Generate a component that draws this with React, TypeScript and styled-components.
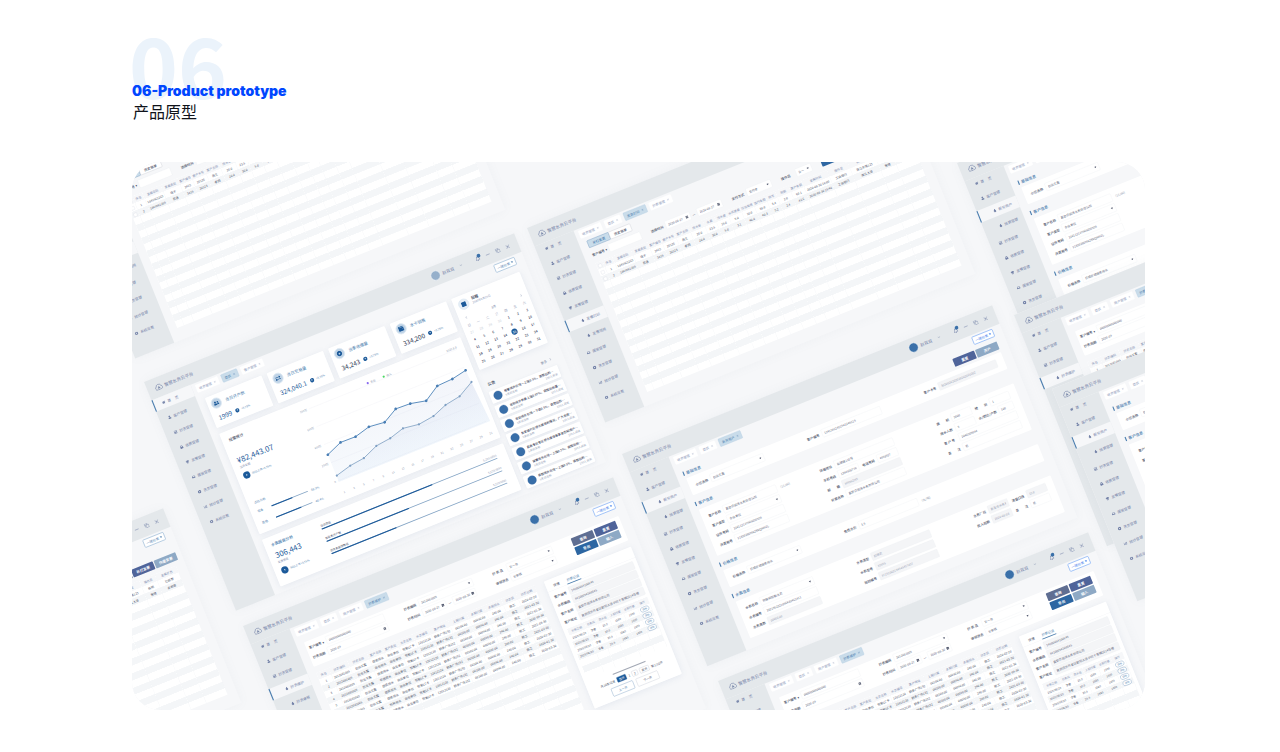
import React, { useId } from "react";
import styled, { createGlobalStyle, css } from "styled-components";
import {
  FaHome, FaUser, FaCalculator, FaLock, FaTrophy, FaTint, FaInbox, FaDotCircle, FaChartBar, FaCog,
  FaUserFriends, FaExchangeAlt, FaWallet, FaCalendarAlt, FaRegBell, FaArrowUp, FaSquare,
} from "react-icons/fa";
import { ChevronDown, ChevronLeft, ChevronRight, Copy, Minus, X } from "lucide-react";

const c = {
  canvas: "#f6f7f9",
  chrome: "#e4e8eb",
  navy: "#7482a8",
  ink: "#4a5167",
  blue: "#1c5a9a",
  mid: "#4a7dae",
  pale: "#c9dcea",
  line: "#edeff3",
};

const GlobalStyle = createGlobalStyle`
  * { box-sizing: border-box; }
  body {
    margin: 0;
    background: #fff;
    font-family: "Noto Sans CJK SC", "Noto Sans", sans-serif;
  }
  button, input, select { font-family: inherit; margin: 0; }
`;

/* ---------- page ---------- */

const Page = styled.main`
  padding: 21px 135px 42px 132px;
`;
const Heading = styled.header`
  height: 141px;
`;
const BigNumber = styled.div`
  font-size: 83px;
  line-height: 84px;
  font-weight: 700;
  color: #ebf3fb;
  margin-left: -3px;
`;
const Title = styled.h1`
  margin: -23px 0 0;
  position: relative;
  font-family: Inter, "Liberation Sans", sans-serif;
  font-weight: 900;
  font-size: 14px;
  line-height: 18px;
  color: #0046ff;
`;
const Subtitle = styled.p`
  margin: 0;
  padding-left: 1px;
  font-size: 16px;
  line-height: 22px;
  color: #10131a;
`;
const Canvas = styled.section`
  position: relative;
  height: 548px;
  overflow: hidden;
  border-radius: 28px;
  background: ${c.canvas};
`;

/* ---------- application window ---------- */

const Win = styled.article<{ $x: number; $y: number; $h: number }>`
  position: absolute;
  left: ${(p) => p.$x}px;
  top: ${(p) => p.$y}px;
  width: 1440px;
  height: ${(p) => p.$h}px;
  transform-origin: 0 0;
  transform: rotate(-21.9deg) scale(0.277);
  display: flex;
  flex-direction: column;
  background: ${c.canvas};
  box-shadow: 0 0 40px rgba(120, 135, 160, 0.06);
  color: ${c.ink};
  font-size: 12px;
`;
const TopBar = styled.header`
  flex: none;
  height: 72px;
  padding: 0 30px 0 28px;
  background: ${c.chrome};
  display: flex;
  align-items: center;
  justify-content: space-between;
`;
const Brand = styled.div`
  display: flex;
  align-items: center;
  gap: 6px;
  font-size: 16px;
  color: ${c.navy};
`;
const TopTools = styled.div`
  display: flex;
  align-items: center;
  color: ${c.navy};
  gap: 20px;
`;
const Avatar = styled.span<{ $soft?: boolean }>`
  width: 36px;
  height: 36px;
  border-radius: 50%;
  border: 2px solid #f2f5f8;
  background: ${(p) => (p.$soft ? "#96b0cb" : "#3a70a9")};
`;
const UserName = styled.span`
  display: flex;
  align-items: center;
  gap: 22px;
  font-size: 15px;
  margin: 0 30px 0 -12px;
`;
const ToolButton = styled.button`
  position: relative;
  display: flex;
  padding: 0;
  border: 0;
  background: none;
  color: inherit;
`;
const Dot = styled.span`
  position: absolute;
  right: -4px;
  top: -6px;
  width: 13px;
  height: 13px;
  border-radius: 50%;
  background: #3a70a9;
`;
const Body = styled.div`
  flex: 1;
  display: flex;
  min-height: 0;
`;
const Sidebar = styled.nav`
  flex: none;
  width: 152px;
  background: ${c.chrome};
  display: flex;
  flex-direction: column;
  gap: 14px;
`;
const NavLink = styled.a<{ $active?: boolean; $sub?: boolean }>`
  display: flex;
  align-items: center;
  gap: 8px;
  height: 44px;
  padding-left: ${(p) => (p.$sub ? 52 : 28)}px;
  border-left: 4px solid ${(p) => (p.$active ? c.mid : "transparent")};
  background: ${(p) => (p.$active ? c.canvas : "transparent")};
  font-size: 13px;
  color: ${c.navy};
  text-decoration: none;
  white-space: pre;
`;
const Main = styled.div`
  flex: 1;
  min-width: 0;
  display: flex;
  flex-direction: column;
`;
const TabBar = styled.div`
  flex: none;
  display: flex;
  align-items: center;
  height: 44px;
  gap: 12px;
  padding: 0 32px 0 14px;
`;
const Tab = styled.button<{ $active?: boolean }>`
  height: 30px;
  padding: 0 10px;
  display: flex;
  align-items: center;
  gap: 8px;
  border: 1px solid ${(p) => (p.$active ? "#a9c6de" : "#fff")};
  border-radius: 3px;
  background: ${(p) => (p.$active ? c.pale : "#fff")};
  color: ${(p) => (p.$active ? c.mid : "#8e9aba")};
  font-size: 12px;
`;
const QuickButton = styled.button<{ $bright?: boolean }>`
  margin-left: auto;
  height: 30px;
  padding: 0 8px;
  display: flex;
  align-items: center;
  gap: 5px;
  background: #fff;
  border: 2px solid ${(p) => (p.$bright ? "#6ba0f5" : "#8db1d2")};
  border-radius: 4px;
  color: ${(p) => (p.$bright ? "#2f74ea" : c.mid)};
  font-size: 12px;
`;
const Content = styled.div<{ $top: number }>`
  padding: ${(p) => p.$top}px 34px 0 30px;
`;
const Card = styled.section`
  background: #fff;
  border-radius: 4px;
  box-shadow: 0 4px 24px rgba(110, 130, 170, 0.12);
`;
const Caret = styled.span`
  width: 0;
  height: 0;
  flex: none;
  border: 4px solid transparent;
  border-top: 6px solid currentColor;
  border-bottom: 0;
`;

function Logo() {
  return (
    <svg width="30" height="24" viewBox="0 0 30 24" fill="none" stroke={c.navy} strokeWidth="2">
      <path d="M8 22a6.500 6.500 0 0 1-2-12.600a9 9 0 0 1 17.500-.4a6.800 6.800 0 0 1-1.500 13z" />
      <path d="M15 10l-4 7h8z" fill={c.navy} strokeWidth="1" />
    </svg>
  );
}

type NavEntry = { text: string; icon: React.ReactNode; sub?: boolean; active?: boolean };

const topLinks = {
  home: { text: "首　 页", icon: <FaHome /> },
  customer: { text: "客户管理", icon: <FaUser /> },
  reading: { text: "抄表管理", icon: <FaCalculator /> },
  charge: { text: "收费管理", icon: <FaLock /> },
  invoice: { text: "发票管理", icon: <FaTrophy /> },
  install: { text: "报装管理", icon: <FaInbox /> },
  meter: { text: "表务管理", icon: <FaDotCircle /> },
  stats: { text: "统计管理", icon: <FaChartBar /> },
  system: { text: "系统设置", icon: <FaCog /> },
};
const sub = (text: string, active = false): NavEntry => ({ text, icon: <FaTint />, sub: true, active });
const t = topLinks;
const tail: NavEntry[] = [t.install, t.meter, t.stats, t.system];

const navs: Record<string, NavEntry[]> = {
  dashboard: [{ ...t.home, active: true }, t.customer, t.reading, t.charge, t.invoice, ...tail],
  invoice: [t.home, t.customer, t.reading, t.charge, t.invoice, sub("发票打印", true), sub("发票领用"), ...tail],
  form: [t.home, t.customer, sub("新开用户", true), sub("结算管理"), t.reading, t.charge, t.invoice, ...tail],
  reading: [t.home, t.customer, t.reading, sub("抄表维护", true), sub("抄表审核"), t.charge, t.invoice, ...tail],
};

type WindowProps = {
  x: number; y: number; h: number; nav: string; tabs: string[]; current: number;
  top: number; soft?: boolean; children: React.ReactNode;
};

function AppWindow({ x, y, h, nav, tabs, current, top, soft, children }: WindowProps) {
  return (
    <Win $x={x} $y={y} $h={h}>
      <TopBar>
        <Brand><Logo />智慧水务云平台</Brand>
        <TopTools>
          <Avatar $soft={soft} />
          <UserName>赵双双<ChevronDown size={12} /></UserName>
          <ToolButton aria-label="消息"><FaRegBell size={18} /><Dot /></ToolButton>
          <ToolButton aria-label="最小化"><Minus size={20} /></ToolButton>
          <ToolButton aria-label="还原"><Copy size={18} /></ToolButton>
          <ToolButton aria-label="关闭"><X size={19} /></ToolButton>
        </TopTools>
      </TopBar>
      <Body>
        <Sidebar>
          {navs[nav].map((n) => (
            <NavLink key={n.text} href="#" $active={n.active} $sub={n.sub}>{n.icon}{n.text}</NavLink>
          ))}
        </Sidebar>
        <Main>
          <TabBar>
            {tabs.map((name, i) => (
              <Tab key={name} $active={i === current}>{name}<X size={9} /></Tab>
            ))}
            <QuickButton $bright={!soft && nav !== "invoice"}>一键分类<Caret /></QuickButton>
          </TabBar>
          <Content $top={top}>{children}</Content>
        </Main>
      </Body>
    </Win>
  );
}

/* ---------- controls ---------- */

const FieldBox = styled.div<{ $w?: number }>`
  display: flex;
  align-items: center;
  gap: 8px;
  height: 30px;
  min-width: 0;
  ${(p) => (p.$w ? css`flex: none; width: ${p.$w}px;` : css`flex: 1;`)}
`;
const FieldLabel = styled.label`
  flex: none;
  min-width: 50px;
  font-size: 12px;
  font-weight: 500;
  white-space: pre;
`;
const controlStyle = css<{ $dim?: boolean; $shade?: boolean }>`
  flex: 1;
  min-width: 0;
  width: 100%;
  height: 30px;
  padding: 0 8px;
  border: 1px solid ${c.line};
  border-radius: 3px;
  background: ${(p) => (p.$dim || p.$shade ? "#f4f5f7" : "#fff")};
  color: ${(p) => (p.$dim ? "#9aa2b5" : "#5e667b")};
  font-size: 11px;
`;
const TextInput = styled.input`${controlStyle}`;
const Select = styled.select`
  ${controlStyle}
  appearance: none;
`;
const SelectWrap = styled.span`
  flex: 1;
  min-width: 0;
  display: grid;
  align-items: center;
  color: ${c.ink};
  & > * { grid-area: 1 / 1; }
  & > ${Caret} { justify-self: end; margin-right: 10px; pointer-events: none; }
  & > svg { justify-self: end; margin-right: 8px; }
`;

type FieldProps = { label: string; value: string; kind?: "text" | "select" | "date" | "dim" | "shade"; w?: number };

function Field({ label, value, kind = "text", w }: FieldProps) {
  const id = useId();
  return (
    <FieldBox $w={w}>
      {label && <FieldLabel htmlFor={id}>{label}</FieldLabel>}
      {kind === "select" ? (
        <SelectWrap>
          <Select id={id}><option>{value}</option></Select>
          <Caret />
        </SelectWrap>
      ) : kind === "date" ? (
        <SelectWrap>
          <TextInput id={id} defaultValue={value} aria-label={label || "日期"} />
          <FaCalendarAlt size={11} />
        </SelectWrap>
      ) : (
        <TextInput id={id} defaultValue={value} $dim={kind === "dim"} $shade={kind === "shade"} />
      )}
    </FieldBox>
  );
}

const tones = { slate: "#5f6e92", indigo: "#4f649a", blue: "#2d66a2", sky: "#8ea9c5" };
const ActionButton = styled.button<{ $tone: keyof typeof tones }>`
  width: 84px;
  height: 30px;
  border: 0;
  border-radius: 3px;
  background: ${(p) => tones[p.$tone]};
  color: #fff;
  font-size: 13px;
  font-weight: 700;
`;

/* ---------- dashboard ---------- */

const DashGrid = styled.div`
  display: grid;
  grid-template-columns: 1fr 266px;
  gap: 20px;
`;
const Column = styled.div`
  display: flex;
  flex-direction: column;
  gap: 22px;
`;
const StatRow = styled.div`
  display: grid;
  grid-template-columns: repeat(4, 1fr);
  gap: 20px;
`;
const StatCard = styled(Card)`
  height: 117px;
  padding: 12px;
`;
const StatHead = styled.div`
  display: flex;
  align-items: center;
  gap: 14px;
  font-size: 15px;
  color: ${c.mid};
`;
const RoundIcon = styled.span<{ $plain?: boolean }>`
  width: 40px;
  height: 40px;
  border-radius: 50%;
  border: 3px solid #dfe9f3;
  background: ${(p) => (p.$plain ? "#e6eef6" : "#bfd3e6")};
  color: ${c.blue};
  display: flex;
  align-items: center;
  justify-content: center;
  font-size: 20px;
`;
const StatValue = styled.div<{ $dark?: boolean }>`
  display: flex;
  align-items: center;
  gap: 14px;
  margin-top: 16px;
  padding-left: 8px;
  font-size: 23px;
  line-height: 32px;
  color: ${(p) => (p.$dark ? "#26324e" : c.blue)};
`;
const Trend = styled.span<{ $big?: boolean }>`
  display: flex;
  align-items: center;
  gap: 8px;
  font-size: 10px;
  line-height: 16px;
  color: ${c.mid};
  & > i {
    width: ${(p) => (p.$big ? 26 : 15)}px;
    height: ${(p) => (p.$big ? 26 : 15)}px;
    border-radius: 50%;
    background: ${c.blue};
    color: #fff;
    display: flex;
    align-items: center;
    justify-content: center;
    font-size: 8px;
  }
`;
const ChartCard = styled(Card)`
  height: 391px;
  display: grid;
  grid-template-columns: 300px 1fr;
`;
const ReportCard = styled(Card)`
  height: 181px;
  display: grid;
  grid-template-columns: 215px 1fr;
`;
const Metric = styled.div<{ $pad: number }>`
  padding: ${(p) => p.$pad}px 0 0 24px;
`;
const MetricTitle = styled.h3<{ $gap: number; $blue?: boolean }>`
  margin: 0 0 ${(p) => p.$gap}px;
  font-size: 14px;
  line-height: 20px;
  font-weight: 500;
  color: ${(p) => (p.$blue ? c.mid : c.ink)};
`;
const Amount = styled.div`
  font-size: 28px;
  line-height: 38px;
  color: ${c.blue};
`;
const Note = styled.div`
  font-size: 10px;
  line-height: 16px;
  margin-bottom: 14px;
  color: #7c89a8;
`;
const Share = styled.div`
  margin-top: 80px;
  display: flex;
  flex-direction: column;
  gap: 26px;
  font-size: 11px;
  line-height: 18px;
  color: ${c.mid};
`;
const ShareTitle = styled.div`
  margin-bottom: -10px;
`;
const ShareRow = styled.div`
  display: grid;
  grid-template-columns: 42px 142px auto;
  gap: 12px;
  align-items: center;
`;
const Track = styled.div`
  height: 3px;
  border-radius: 2px;
  background: #86a6c6;
`;
const Fill = styled.div`
  height: 4px;
  border-radius: 2px;
  background: ${c.blue};
`;
const Progress = styled.div`
  padding: 24px 39px 0 0;
  display: flex;
  flex-direction: column;
  gap: 27px;
`;
const ProgressHead = styled.div`
  display: flex;
  justify-content: space-between;
  font-size: 10px;
  line-height: 16px;
  margin-bottom: 2px;
  & > span { color: #95a0b8; }
`;
const CalendarCard = styled(Card)`
  height: 276px;
  padding: 14px 8px;
`;
const CalendarHead = styled.div`
  display: flex;
  gap: 12px;
  padding-left: 8px;
  font-size: 10px;
  line-height: 16px;
  color: #8390b3;
  & strong {
    display: block;
    font-size: 14px;
    line-height: 18px;
    color: ${c.ink};
  }
`;
const MonthRow = styled.div`
  display: flex;
  align-items: center;
  justify-content: space-between;
  height: 28px;
  margin-top: 14px;
  padding: 0 12px;
  font-size: 11px;
  color: #7583a5;
`;
const CalendarTable = styled.table`
  width: 100%;
  table-layout: fixed;
  border-collapse: collapse;
  text-align: center;
  font-size: 12px;
  & th, & td { height: 28px; padding: 0; font-weight: 500; }
  & th { color: #97a2b9; font-weight: 400; }
`;
const Day = styled.td<{ $muted?: boolean; $today?: boolean }>`
  color: ${(p) => (p.$muted ? "#d3d8e2" : "#37415c")};
  & > span {
    display: inline-block;
    width: 22px;
    line-height: 22px;
    border-radius: 50%;
    ${(p) => p.$today && css`background: ${c.blue}; color: #fff;`}
  }
`;
const NoticeHead = styled.div`
  display: flex;
  align-items: center;
  justify-content: space-between;
  margin: 25px 8px -7px;
  height: 24px;
  font-size: 14px;
  font-weight: 700;
  & > a {
    display: flex;
    align-items: center;
    gap: 8px;
    font-size: 12px;
    font-weight: 400;
    color: #7b879f;
    text-decoration: none;
  }
`;
const NoticeList = styled.ul`
  list-style: none;
  margin: 0;
  padding: 0;
  display: flex;
  flex-direction: column;
  gap: 9px;
`;
const Notice = styled.li`
  display: flex;
  align-items: center;
  gap: 10px;
  height: 46px;
  padding: 0 10px 0 12px;
  background: #fff;
  border-radius: 4px;
  box-shadow: 0 3px 14px rgba(110, 130, 170, 0.12);
  & > i { flex: none; width: 32px; height: 32px; border-radius: 50%; background: #386ea8; border: 1px solid #24599a; }
  & > div { flex: 1; min-width: 0; }
`;
const NoticeText = styled.div`
  font-size: 11px;
  line-height: 18px;
  font-weight: 500;
  color: #3a4157;
  overflow: hidden;
  white-space: nowrap;
  text-overflow: ellipsis;
`;
const NoticeMeta = styled.div`
  display: flex;
  justify-content: space-between;
  font-size: 10px;
  line-height: 14px;
  color: #929db5;
`;

const stats = [
  { label: "当日开户数", value: "1999", icon: <FaUserFriends /> },
  { label: "当日交易量", value: "324,040.1", icon: <FaExchangeAlt /> },
  { label: "当季收缴量", value: "34,243", icon: <FaDotCircle />, dark: true },
  { label: "水卡销售", value: "334,200", icon: <FaWallet />, dark: true },
];
const upper = [[36, 216], [95, 192], [153, 193], [211, 178], [270, 184], [325, 154], [381, 156], [438, 168], [495, 133], [555, 130], [611, 119]];
const lower = [[38, 298], [96, 283], [152, 276], [210, 252], [267, 245], [323, 229], [382, 237], [442, 229], [497, 208], [556, 198], [615, 166]];
const path = (pts: number[][]) => pts.map(([px, py]) => `${px},${py}`).join(" ");

function LineChart() {
  const gid = useId();
  return (
    <svg width="638" height="391" viewBox="0 0 638 391" fontSize="10" fill="#8e99b0">
      <defs>
        <linearGradient id={gid} x1="0" y1="0" x2="0" y2="1">
          <stop offset="0" stopColor="#8f9fd0" stopOpacity=".11" />
          <stop offset="1" stopColor="#8fb8e6" stopOpacity=".07" />
        </linearGradient>
      </defs>
      {["800万", "600万", "400万", "200万", "0"].map((label, i) => (
        <g key={label}>
          <text x="26" y={41 + i * 70} textAnchor="end">{label}</text>
          <path d={`M36 ${37 + i * 70}H611`} stroke="#eaedf2" />
        </g>
      ))}
      {Array.from({ length: 16 }, (_, i) => (
        <text key={i} x={41 + i * 38} y="367" textAnchor="middle">{i * 2 + 1}</text>
      ))}
      <polygon points={`36,322 ${path(upper)} 625,322`} fill={`url(#${gid})`} />
      <polygon points={`36,322 ${path(lower)} 625,322`} fill={`url(#${gid})`} />
      <polyline points={path(lower)} fill="none" stroke="#8eabc9" strokeWidth="3" />
      <polyline points={path(upper)} fill="none" stroke="#5186ba" strokeWidth="3" />
      {upper.map(([px, py]) => <circle key={px} cx={px} cy={py} r="5" fill="#4a7fb5" />)}
      {lower.map(([px, py]) => <circle key={px} cx={px} cy={py} r="4" fill="#7fa0c4" />)}
      <circle cx="266" cy="30" r="4" fill="#8a6cf0" />
      <text x="276" y="34">支出</text>
      <circle cx="328" cy="30" r="4" fill="#4bd964" />
      <text x="338" y="34">收入</text>
      <text x="592" y="33" textAnchor="middle">2020.8.8</text>
    </svg>
  );
}

const notices = [
  "接管境外在线一上涨0.5%，调整后的基价", "收取境外有费上涨0.67%，调整后的基价", "收取境外在线一下调0.5%，调整后的基价",
  "金堂镇片区停水维修的情况，广大市民", "嘉善专区专区停水维修等事宜告知用户", "接管境外在线一上涨0.5%，调整后的基价",
  "调整境外在线一上涨0.5%，调整后的基价",
];
const weeks = [
  [27, 28, 29, 30, 1, 2, 3], [4, 5, 6, 7, 8, 9, 10], [11, 12, 13, 14, 15, 16, 17],
  [18, 19, 20, 21, 22, 23, 24], [25, 26, 27, 28, 29, 30, 31],
];
const progress = [
  { name: "当前用量", pct: 63 }, { name: "智能表开户数", pct: 47 }, { name: "远传表报装数量", pct: 37 },
];

function Dashboard(props: { x: number; y: number }) {
  return (
    <AppWindow {...props} h={890} nav="dashboard" tabs={["收费管理", "首页", "客户管理"]} current={1} top={20} soft>
      <DashGrid>
        <Column>
          <StatRow>
            {stats.map((s) => (
              <StatCard key={s.label}>
                <StatHead><RoundIcon>{s.icon}</RoundIcon>{s.label}</StatHead>
                <StatValue $dark={s.dark}>{s.value}<Trend><i><FaArrowUp /></i>+0.75%</Trend></StatValue>
              </StatCard>
            ))}
          </StatRow>
          <ChartCard>
            <Metric $pad={23}>
              <MetricTitle $gap={51}>经营统计</MetricTitle>
              <Amount>¥82,443.07</Amount>
              <Note>当月总额</Note>
              <Trend $big><i><FaArrowUp /></i>同比上月+0.75%</Trend>
              <Share>
                <ShareTitle>占比分析</ShareTitle>
                <ShareRow>现金<Track><Fill style={{ width: "58%" }} /></Track>60.9%</ShareRow>
                <ShareRow>其他<Track><Fill style={{ width: "70%" }} /></Track>40.4%</ShareRow>
              </Share>
            </Metric>
            <LineChart />
          </ChartCard>
          <ReportCard>
            <Metric $pad={19}>
              <MetricTitle $gap={11} $blue>水表报装分析</MetricTitle>
              <Amount>306,443</Amount>
              <Note>总报装量</Note>
              <Trend $big><i><FaArrowUp /></i>同比上年+0.75%</Trend>
            </Metric>
            <Progress>
              {progress.map((p) => (
                <div key={p.name}>
                  <ProgressHead>{p.name}<span>5,230/6890</span></ProgressHead>
                  <Track><Fill style={{ width: `${p.pct}%` }} /></Track>
                </div>
              ))}
            </Progress>
          </ReportCard>
        </Column>
        <Column>
          <CalendarCard>
            <CalendarHead>
              <RoundIcon $plain><FaSquare /></RoundIcon>
              <div><strong>日程</strong>2020年8月15日</div>
            </CalendarHead>
            <MonthRow><ChevronLeft size={12} />8月<ChevronRight size={12} /></MonthRow>
            <CalendarTable>
              <thead><tr>{[..."日一二三四五六"].map((d) => <th key={d}>{d}</th>)}</tr></thead>
              <tbody>
                {weeks.map((w, r) => (
                  <tr key={r}>
                    {w.map((d) => <Day key={d} $muted={r === 0 && d > 20} $today={d === 15}><span>{d}</span></Day>)}
                  </tr>
                ))}
              </tbody>
            </CalendarTable>
          </CalendarCard>
          <NoticeHead>公告<a href="#">更多<ChevronRight size={12} /></a></NoticeHead>
          <NoticeList>
            {notices.map((n, i) => (
              <Notice key={i}>
                <i />
                <div>
                  <NoticeText>{n}，请周知</NoticeText>
                  <NoticeMeta><span>5天前发布</span><span>100人阅读</span></NoticeMeta>
                </div>
              </Notice>
            ))}
          </NoticeList>
        </Column>
      </DashGrid>
    </AppWindow>
  );
}

/* ---------- data tables ---------- */

const DataTable = styled.table<{ $row: number; $size: number }>`
  width: 100%;
  table-layout: fixed;
  border-collapse: collapse;
  text-align: center;
  font-size: ${(p) => p.$size}px;
  white-space: nowrap;
  background: #fff;
  & th, & td {
    height: ${(p) => p.$row}px;
    line-height: 16px;
    padding: 0;
    overflow: hidden;
    border-right: 1px solid #f0f2f5;
  }
  & th { color: #8491b2; font-weight: 400; background: ${c.canvas}; height: 26px; }
  & td { color: #4d5469; }
  & tbody tr:nth-child(even) td { background: #f4f6f8; border-right-color: #eef1f4; }
  & input { width: 13px; height: 13px; appearance: none; background: #fff; border: 1px solid #d8dce4; border-radius: 2px; vertical-align: middle; }
`;

type GridProps = { cols: [string, number][]; rows: string[][]; total: number; row: number; size?: number; check?: boolean };

function Grid({ cols, rows, total, row, size = 11, check }: GridProps) {
  return (
    <DataTable $row={row} $size={size}>
      <colgroup>
        {check && <col width={26} />}
        {cols.map(([name, w], i) => <col key={name + i} width={w} />)}
      </colgroup>
      <thead>
        <tr>
          {check && <th><input type="checkbox" aria-label="全选" /></th>}
          {cols.map(([name], i) => <th key={i}>{name}</th>)}
        </tr>
      </thead>
      <tbody>
        {Array.from({ length: total }, (_, r) => (
          <tr key={r}>
            {check && <td>{rows[r] && <input type="checkbox" aria-label={`选择第${r + 1}行`} />}</td>}
            {cols.map((_, i) => {
              const value = rows[r]?.[i];
              return <td key={i}>{value === "详情" ? <Detail>{value}</Detail> : value}</td>;
            })}
          </tr>
        ))}
      </tbody>
    </DataTable>
  );
}

const Detail = styled.button`
  height: 18px;
  padding: 0 6px;
  border: 1px solid ${c.mid};
  border-radius: 9px;
  background: #fff;
  color: ${c.mid};
  font-size: 9px;
  line-height: 14px;
`;
const Switch = styled.div`
  display: flex;
  margin-bottom: 12px;
`;
const SwitchButton = styled.button<{ $active?: boolean }>`
  width: 84px;
  height: 28px;
  border: 1px solid ${(p) => (p.$active ? c.mid : "#b9bec9")};
  border-radius: 3px;
  background: ${(p) => (p.$active ? c.pale : "#fff")};
  color: ${(p) => (p.$active ? c.mid : c.ink)};
  font-size: 12px;
  font-weight: 500;
`;
const FilterRow = styled.div`
  display: flex;
  align-items: center;
  gap: 38px;
  margin-bottom: 17px;
`;
const DateRange = styled.div`
  display: flex;
  align-items: center;
  gap: 8px;
`;
const Actions = styled.div`
  margin-left: auto;
  display: flex;
  gap: 4px;
`;

const invoiceCols: [string, number][] = [
  ["序号", 38], ["发票号码", 72], ["发票类型", 66], ["客户编号", 48], ["客户卡号", 54], ["客户名称", 56], ["用水量", 56],
  ["水费", 44], ["污水费", 48], ["水资源费", 50], ["垃圾处理", 50], ["违约金额", 50], ["税率", 40], ["税额", 52],
  ["客户金额", 50], ["发票时间", 100], ["操作员", 80], ["客户地址", 100], ["操作员", 60], ["发票状态", 83],
];
const invoiceRows = [
  ["1", "1849561265", "电子", "3415", "20126", "张三", "20.0", "23.5", "15.0", "5.0", "10.0", "38.0", "3.4", "2.0", "60.1", "2020-08-30 16:00", "工商银行", "滨江东路125", "张明", "已邮寄"],
  ["2", "1849561265", "普通", "3415", "20123", "李四", "20.0", "30.0", "5.0", "3.1", "40.0", "40.3", "5.2", "2.4", "42.6", "2020-08-30 15:40", "工商银行", "滨江大道", "管理", "未邮寄"],
];

function InvoiceWindow(props: { x: number; y: number }) {
  return (
    <AppWindow {...props} h={757} nav="invoice" tabs={["收费管理", "首页", "发票打印", "抄表管理"]} current={2} top={7}>
      <Switch>
        <SwitchButton $active>补打发票</SwitchButton>
        <SwitchButton>历史账单</SwitchButton>
      </Switch>
      <FilterRow>
        <Field label="客户编号 ▾" value="" w={190} />
        <DateRange>
          <Field label="选择时间" value="2020-08-27" kind="date" w={154} />—
          <Field label="" value="2020-08-27" kind="date" w={96} />
        </DateRange>
        <Field label="支付方式" value="支付宝" kind="select" w={154} />
        <Field label="操作员" value="全一" kind="select" w={118} />
        <Actions>
          <ActionButton $tone="blue">查询</ActionButton>
          <ActionButton $tone="slate">重置</ActionButton>
          <ActionButton $tone="indigo">补打发票</ActionButton>
          <ActionButton $tone="sky">作废发票</ActionButton>
        </Actions>
      </FilterRow>
      <Grid cols={invoiceCols} rows={invoiceRows} total={19} row={25} check />
    </AppWindow>
  );
}

/* ---------- customer form ---------- */

const SectionTitle = styled.div<{ $first?: boolean }>`
  display: flex;
  align-items: ${(p) => (p.$first ? "flex-end" : "center")};
  justify-content: space-between;
  height: ${(p) => (p.$first ? 30 : 20)}px;
  margin: ${(p) => (p.$first ? 0 : 23)}px 0 ${(p) => (p.$first ? 11 : 13)}px -4px;
  & > h3 {
    margin: 0;
    padding-left: 8px;
    border-left: 4px solid ${c.mid};
    font-size: 14px;
    line-height: 16px;
    font-weight: 500;
    color: ${c.mid};
  }
`;
const FormCard = styled(Card)`
  box-shadow: none;
  padding: 14px 28px 14px 24px;
`;
const FormRow = styled.div`
  display: grid;
  grid-template-columns: 266px 288px 285px;
  justify-content: space-between;
  align-items: center;
  height: 38px;
`;
const Pair = styled.div<{ $wide?: boolean }>`
  display: flex;
  align-items: center;
  gap: 14px;
  min-width: 0;
  grid-column: ${(p) => (p.$wide ? "2 / 4" : "auto")};
`;
const Hint = styled.span`
  flex: none;
  font-size: 11px;
  color: #8e98ad;
`;

function CustomerWindow(props: { x: number; y: number }) {
  return (
    <AppWindow {...props} h={826} nav="form" tabs={["收费管理", "首页", "新开用户"]} current={2} top={11}>
      <SectionTitle $first>
        <h3>基础信息</h3>
        <Actions>
          <ActionButton $tone="indigo">重置</ActionButton>
          <ActionButton $tone="sky">开户</ActionButton>
        </Actions>
      </SectionTitle>
      <FormCard>
        <FormRow>
          <Field label="小区名称" value="创业天露" kind="select" />
          <Field label="客户编号" value="15415412451541245115" />
          <Field label="客户卡号" value="3020020202020202020202" kind="dim" />
        </FormRow>
      </FormCard>
      <SectionTitle><h3>客户信息</h3></SectionTitle>
      <FormCard>
        <FormRow>
          <Pair><Field label="客户名称" value="昌黎县润泽水务有限公司" w={266} /><Hint>(11/80)</Hint></Pair>
          <Field label="详细地址" value="仙湖镇110号" />
          <Pair><Field label="面　　积" value="5000" /><Field label="楼　　层" value="1" /></Pair>
        </FormRow>
        <FormRow>
          <Field label="客户类型" value="企业单位" kind="select" />
          <Pair><Field label="手机号码" value="13545687760" /><Field label="电话号码" value="4558527" /></Pair>
          <Pair><Field label="用水人数" value="5" /><Field label="水/燃比/户数" value="100" /></Pair>
        </FormRow>
        <FormRow>
          <Field label="证件号码" value="310112197505050555" />
          <Field label="邮　　箱" value="H5OH2H5" kind="dim" />
          <Field label="客 户 号" value="2040505044" />
        </FormRow>
        <FormRow>
          <Field label="开票税号" value="91350200MA2XNQHM2L" />
          <Field label="开票名称" value="昌黎县润泽水务有限公司" />
          <Field label="备　　注" value="无" />
        </FormRow>
      </FormCard>
      <SectionTitle><h3>价格信息</h3></SectionTitle>
      <FormCard>
        <FormRow>
          <Field label="价格名称" value="县城在城居民用水" kind="select" />
          <Pair $wide><Field label="免费水价" value="3.5" w={288} /><Hint>(元/吨)</Hint></Pair>
        </FormRow>
      </FormCard>
      <SectionTitle><h3>水表信息</h3></SectionTitle>
      <FormCard>
        <FormRow>
          <Field label="水表名称" value="物联网智能水表" kind="select" />
          <Field label="水表类型" value="阶梯表" kind="dim" />
          <Pair><Field label="水表厂商" value="慈溪市水务科技" kind="dim" /><Field label="流量口径" value="15.0" kind="dim" /></Pair>
        </FormRow>
        <FormRow>
          <Field label="水表编号" value="3321562321056489461411" />
          <Field label="水表型号" value="55555" kind="dim" />
          <Pair><Field label="投入周期" value="2020-08-08" kind="dim" /><Field label="备　　注" value="无" /></Pair>
        </FormRow>
        <FormRow>
          <Field label="水表底数" value="00000.00" kind="dim" />
          <Field label="铅封编号" value="57151002154545457457" kind="dim" />
        </FormRow>
      </FormCard>
    </AppWindow>
  );
}

/* ---------- meter reading ---------- */

const FilterCard = styled(Card)`
  box-shadow: none;
  display: flex;
  justify-content: space-between;
  height: 95px;
  padding: 9px 18px 0 10px;
  margin-bottom: 24px;
`;
const FilterCol = styled.div<{ $w: number }>`
  width: ${(p) => p.$w}px;
  display: flex;
  flex-direction: column;
  gap: 8px;
  & > * { flex: none; }
`;
const ButtonGrid = styled.div`
  display: grid;
  grid-template-columns: 84px 84px;
  grid-auto-rows: 30px;
  gap: 5px;
  padding-top: 2px;
`;
const Split = styled.div`
  display: grid;
  grid-template-columns: 1fr 339px;
  gap: 36px;
  align-items: start;
`;
const Panel = styled(Card)`
  height: 495px;
  padding: 12px 14px;
  font-size: 12px;
`;
const PanelTabs = styled.div`
  display: flex;
  gap: 22px;
  padding: 0 24px;
  margin: 0 -14px 8px;
  border-bottom: 1px solid ${c.line};
`;
const PanelTab = styled.button<{ $active?: boolean }>`
  height: 30px;
  padding: 0 3px;
  border: 0;
  border-bottom: 3px solid ${(p) => (p.$active ? c.mid : "transparent")};
  background: none;
  color: ${(p) => (p.$active ? c.mid : c.ink)};
  font-size: 12px;
`;
const PanelFields = styled.div`
  display: flex;
  flex-direction: column;
  gap: 3px;
  margin-bottom: 10px;
  & > * { flex: none; }
`;
const ScrollThumb = styled.div`
  width: 128px;
  height: 4px;
  margin: 18px auto 12px;
  border-radius: 2px;
  background: #a3a9b5;
`;
const Pager = styled.div`
  display: flex;
  align-items: center;
  justify-content: center;
  gap: 8px;
  font-size: 11px;
  height: 22px;
`;
const PageButton = styled.button<{ $active?: boolean; $wide?: boolean }>`
  min-width: ${(p) => (p.$wide ? 84 : 22)}px;
  height: ${(p) => (p.$wide ? 30 : 20)}px;
  padding: 0 6px;
  border: 1px solid ${(p) => (p.$active ? c.mid : "#b4bac6")};
  border-radius: 3px;
  background: ${(p) => (p.$active && !p.$wide ? c.blue : "#fff")};
  color: ${(p) => (p.$active ? (p.$wide ? c.mid : "#fff") : c.ink)};
  font-size: 11px;
`;
const PageSteps = styled.div`
  display: flex;
  justify-content: center;
  gap: 12px;
  margin-top: 10px;
`;

const readingCols: [string, number][] = [
  ["序号", 48], ["抄表编码", 72], ["抄表名称", 76], ["客户名称", 58], ["客户类型", 58], ["水表名称", 62], ["水表编号", 62],
  ["客户地址", 76], ["上期行度", 72], ["本期行度", 68], ["本期用水", 66], ["抄表员", 58], ["抄表日期", 72],
];
const kinds = ["居民用水", "商业用水", "居民用水", "非居民水", "居民用水", "居民用水", "居民用水", "特种用水", "居民用水"];
const dates = ["2020-02-20", "2021-03-30", "2021-01-30", "2020-04-30", "2021-03-30", "2021-02-20", "2020-01-30", "2020-01-30", "2020-03-30"];
const readingRows = kinds.map((k, i) => [
  String(i + 1), "2012081005", "创业天露", k, "商业单位", "智能LC卡", "12012120", "鹤泰广场192", "00100.00", "00090.00", "240.00", "陈工", dates[i],
]);
const recordCols: [string, number][] = [["抄表日期", 66], ["抄表员", 44], ["用水量", 46], ["上期行度", 54], ["本期行度", 54], ["操作", 47]];
const recordRows = Array.from({ length: 4 }, () => ["2020/08/20", "李春", "20.0", "1580", "1600", "详情"]);

function ReadingWindow(props: { x: number; y: number }) {
  return (
    <AppWindow {...props} h={900} nav="reading" tabs={["收费管理", "首页", "用户管理", "抄表维护"]} current={3} top={21}>
      <FilterCard>
        <FilterCol $w={293}>
          <Field label="客户编号  ▾" value="00000000000000" w={293} />
          <Field label="抄表周期" value="2020-09" kind="date" w={293} />
        </FilterCol>
        <FilterCol $w={268}>
          <Field label="抄表编码" value="2012081005" kind="select" w={268} />
          <DateRange>
            <Field label="抄表时间" value="2020-08-27" kind="date" w={150} />—
            <Field label="" value="2020-08-30" kind="date" w={90} />
          </DateRange>
        </FilterCol>
        <FilterCol $w={235}>
          <Field label="抄 表 员" value="全一市" kind="select" w={235} />
          <Field label="审核状态" value="全审核" kind="select" w={235} />
        </FilterCol>
        <ButtonGrid>
          <ActionButton $tone="slate">查询</ActionButton>
          <ActionButton $tone="indigo">重置</ActionButton>
          <ActionButton $tone="blue">导出</ActionButton>
          <ActionButton $tone="sky">输入</ActionButton>
        </ButtonGrid>
      </FilterCard>
      <Split>
        <Grid cols={readingCols} rows={readingRows} total={22} row={24} />
        <Panel>
          <PanelTabs>
            <PanelTab>详情</PanelTab>
            <PanelTab $active>抄表记录</PanelTab>
          </PanelTabs>
          <PanelFields>
            <Field label="客户编号" value="54100054100645" kind="shade" w={311} />
            <Field label="水表编码" value="54100054100645" kind="shade" w={311} />
            <Field label="客户名称" value="昌黎县润泽水务有限公司" kind="shade" w={311} />
            <Field label="客户地址" value="黄骅经济开发区朝阳大道中段十里铺2014号楼" kind="shade" w={311} />
          </PanelFields>
          <Grid cols={recordCols} rows={recordRows} total={7} row={24} size={10} />
          <ScrollThumb />
          <Pager>
            共10条记录<PageButton $active>首页</PageButton>1<PageButton>2</PageButton><PageButton>末页</PageButton>第1/10页
          </Pager>
          <PageSteps>
            <PageButton $wide $active>上一页</PageButton>
            <PageButton $wide>下一页</PageButton>
          </PageSteps>
        </Panel>
      </Split>
    </AppWindow>
  );
}

export default function App() {
  return (
    <>
      <GlobalStyle />
      <Page>
        <Heading>
          <BigNumber>06</BigNumber>
          <Title>06-Product prototype</Title>
          <Subtitle>产品原型</Subtitle>
        </Heading>
        <Canvas>
          <InvoiceWindow x={-75} y={2} />
          <InvoiceWindow x={395} y={66} />
          <InvoiceWindow x={-339} y={495} />
          <Dashboard x={12} y={220} />
          <CustomerWindow x={490} y={292} />
          <ReadingWindow x={111} y={464} />
          <CustomerWindow x={825} y={1} />
          <ReadingWindow x={882} y={153} />
          <CustomerWindow x={920} y={227} />
          <ReadingWindow x={586} y={519} />
        </Canvas>
      </Page>
    </>
  );
}
